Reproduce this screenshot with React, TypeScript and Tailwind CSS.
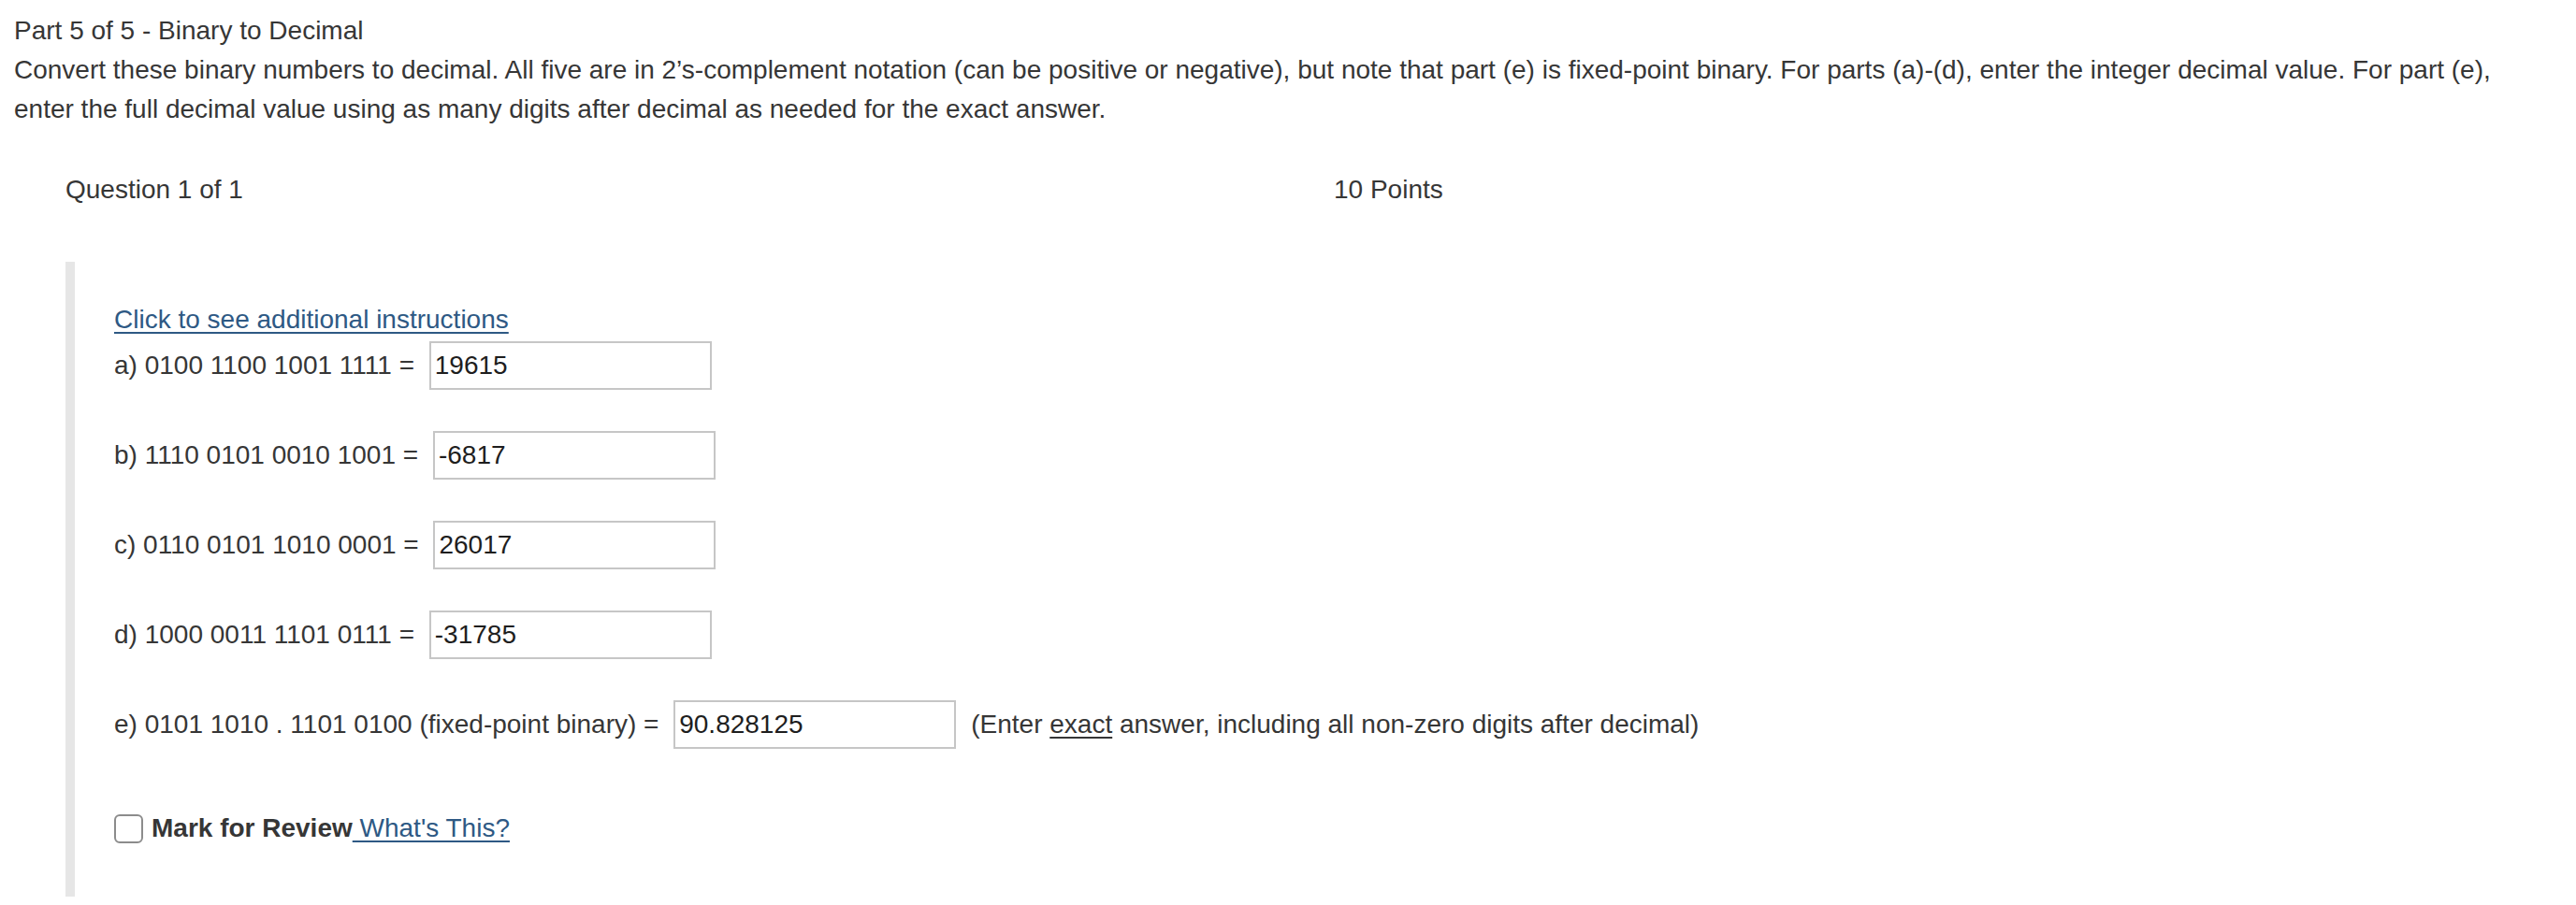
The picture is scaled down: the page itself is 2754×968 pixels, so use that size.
import React from 'react'

interface Part {
  label: string
  value: string
  hint?: boolean
}

const parts: Part[] = [
  { label: 'a) 0100 1100 1001 1111 =', value: '19615' },
  { label: 'b) 1110 0101 0010 1001 =', value: '-6817' },
  { label: 'c) 0110 0101 1010 0001 =', value: '26017' },
  { label: 'd) 1000 0011 1101 0111 =', value: '-31785' },
  { label: 'e) 0101 1010 . 1101 0100 (fixed-point binary) =', value: '90.828125', hint: true },
]

export default function App() {
  return (
    <div className="min-h-screen bg-white font-['Liberation_Sans','Helvetica',Arial,sans-serif] text-[28px] leading-[42px] text-[#363636]">
      {/* Part heading + instructions */}
      <div className="px-[15px] pt-[12px]">
        <p>Part 5 of 5 - Binary to Decimal</p>
        <p className="w-[2700px]">
          Convert these binary numbers to decimal. All five are in 2’s-complement notation (can be positive or negative), but note that part (e) is fixed-point binary. For parts (a)-(d), enter the integer decimal value. For part (e), enter the full decimal value using as many digits after decimal as needed for the exact answer.
        </p>
      </div>

      {/* Question header */}
      <div className="ml-[70px] mt-[44px] flex">
        <div className="w-[1356px]">Question 1 of 1</div>
        <div>10 Points</div>
      </div>

      {/* Question body */}
      <div className="ml-[70px] mt-[56px] border-l-[10px] border-[#e6e6e6] pl-[42px] pt-[41px] pb-[52px]">
        <a
          href="#"
          className="text-[#2e5984] underline decoration-[2px] underline-offset-[4px]"
        >
          Click to see additional instructions
        </a>

        {parts.map((p, i) => (
          <div key={p.label} className={`flex h-[52px] items-center ${i === 0 ? 'mt-[2px]' : 'mt-[44px]'}`}>
            <span className="whitespace-pre">{p.label} </span>
            <input
              type="text"
              readOnly
              value={p.value}
              className="ml-[8px] h-[52px] w-[302px] border-2 border-[#c6c6c6] bg-white pl-[4px] text-[28px] text-[#1e1e1e] outline-none"
            />
            {p.hint && (
              <span className="ml-[16px]">
                (Enter <span className="underline decoration-[2px] underline-offset-[4px]">exact</span> answer, including all non-zero digits after decimal)
              </span>
            )}
          </div>
        ))}

        {/* Mark for review */}
        <div className="mt-[64px] flex items-center">
          <span className="inline-block h-[31px] w-[31px] rounded-[6px] border-2 border-[#8c8c8c] bg-white" />
          <span className="ml-[9px] font-bold">Mark for Review</span>
          <a
            href="#"
            className="whitespace-pre text-[#2e5984] underline decoration-[2px] underline-offset-[4px]"
          >
            {" What's This?"}
          </a>
        </div>
      </div>
    </div>
  )
}
